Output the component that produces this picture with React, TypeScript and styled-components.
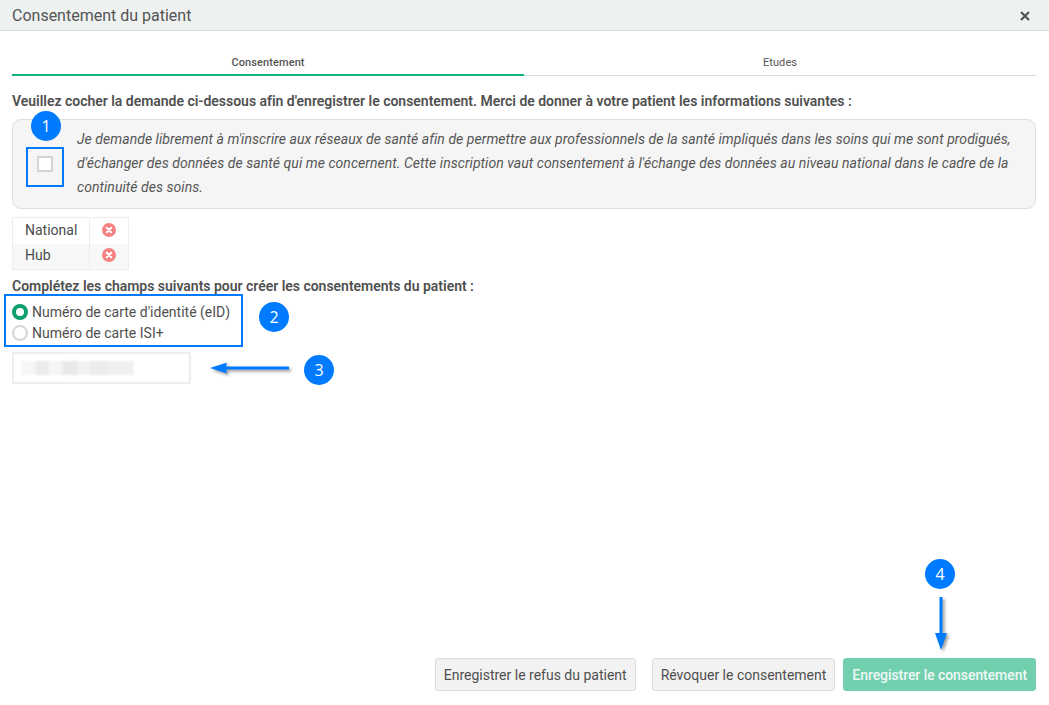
import styled, { createGlobalStyle } from "styled-components";

const GlobalStyle = createGlobalStyle`
  html, body {
    margin: 0;
    padding: 0;
    background: #fff;
  }
  * {
    box-sizing: border-box;
  }
`;

const Page = styled.div`
  position: relative;
  width: 1049px;
  height: 705px;
  display: flex;
  flex-direction: column;
  overflow: hidden;
  background: #fff;
  font-family: Roboto, "Liberation Sans", sans-serif;
  font-size: 14px;
  color: #4a4a4a;
`;

const Header = styled.div`
  height: 31px;
  flex: none;
  display: flex;
  align-items: center;
  justify-content: space-between;
  padding: 1px 19px 0 12px;
  background: #edf1f0;
  border-bottom: 1px solid #d8dedd;
`;

const Title = styled.div`
  font-size: 16px;
  color: #555;
`;

const CloseIcon = styled.svg`
  width: 10px;
  height: 10px;
  display: block;
`;

const Body = styled.div`
  flex: 1;
  display: flex;
  flex-direction: column;
  padding: 0 13px 14px 12px;
`;

const Tabs = styled.div`
  display: flex;
  height: 45px;
  flex: none;
`;

const Tab = styled.div<{ $active?: boolean }>`
  flex: 1;
  display: flex;
  align-items: flex-end;
  justify-content: center;
  padding-bottom: ${({ $active }) => ($active ? "5px" : "6px")};
  font-size: 11px;
  font-weight: ${({ $active }) => ($active ? 500 : 400)};
  letter-spacing: 0.1px;
  color: #555;
  border-bottom: ${({ $active }) =>
    $active ? "2px solid #13b381" : "1px solid #d5dedd"};
`;

const Instruction = styled.div`
  margin-top: 17px;
  font-size: 14px;
  line-height: 17px;
  font-weight: 600;
  letter-spacing: -0.02px;
  color: #505050;
`;

const ConsentBox = styled.div`
  margin-top: 9px;
  height: 90px;
  flex: none;
  display: flex;
  align-items: center;
  padding: 0 20px 2px 24px;
  gap: 24px;
  background: #f5f5f5;
  border: 1px solid #dfdfdf;
  border-radius: 9px;
`;

const CheckBox = styled.div`
  flex: none;
  width: 16px;
  height: 16px;
  margin-top: 2px;
  background: #fff;
  border: 2px solid #d5d5d5;
`;

const ConsentText = styled.div`
  font-style: italic;
  font-size: 14px;
  line-height: 24px;
  letter-spacing: 0.05px;
  color: #555;
`;

const StatusTable = styled.div`
  margin-top: 8px;
  width: 117px;
  flex: none;
  border: 1px solid #eceeee;
`;

const StatusRow = styled.div<{ $shaded?: boolean }>`
  display: flex;
  height: ${({ $shaded }) => ($shaded ? "25px" : "26px")};
  padding-bottom: ${({ $shaded }) => ($shaded ? "1px" : "0")};
  background: ${({ $shaded }) => ($shaded ? "#f7f8f8" : "#fff")};
`;

const StatusName = styled.div`
  width: 77px;
  display: flex;
  align-items: center;
  padding: 0 0 2px 12px;
  border-right: 1px solid #eceeee;
`;

const StatusIcon = styled.div`
  flex: 1;
  display: flex;
  align-items: center;
  justify-content: center;
  padding-bottom: 2px;
`;

const SubHeading = styled.div`
  margin-top: 8px;
  font-size: 14px;
  line-height: 17px;
  font-weight: 600;
  letter-spacing: -0.02px;
  color: #505050;
`;

const RadioGroup = styled.div`
  margin-top: 7px;
  display: flex;
  flex-direction: column;
  gap: 1px;
`;

const RadioRow = styled.div`
  display: flex;
  align-items: center;
  height: 20px;
  gap: 4px;
  font-size: 14px;
  color: #4f4f4f;
`;

const Radio = styled.div<{ $checked?: boolean }>`
  width: 16px;
  height: 16px;
  border-radius: 50%;
  background: #fff;
  border: ${({ $checked }) =>
    $checked ? "4px solid #0e9e6e" : "2px solid #d5d5d5"};
`;

const IdInput = styled.div`
  margin-top: 9px;
  width: 179px;
  height: 32px;
  flex: none;
  display: flex;
  align-items: center;
  padding-left: 7px;
  border: 2px solid #eeeeee;
  background: #fff;
`;

// blurred-out card number
const BlurredValue = styled.div`
  width: 113px;
  height: 14px;
  filter: blur(1px);
  background: linear-gradient(
    90deg,
    #f6f6f6 0 13%,
    #ececec 13% 25%,
    #f6f6f6 25% 36%,
    #e9e9e9 36% 50%,
    #f2f2f2 50% 62%,
    #ececec 62% 78%,
    #f0f0f0 78% 100%
  );
`;

const Footer = styled.div`
  margin-top: auto;
  display: flex;
  justify-content: flex-end;
  gap: 16px;
`;

const Button = styled.button<{ $primary?: boolean }>`
  all: unset;
  height: 31px;
  display: flex;
  align-items: center;
  padding: 0 8px;
  font-family: Roboto, "Liberation Sans", sans-serif;
  font-size: 14px;
  border-radius: 3px;
  color: ${({ $primary }) => ($primary ? "#eef9f5" : "#4f4f4f")};
  background: ${({ $primary }) => ($primary ? "#71cfae" : "#f2f2f2")};
  border: 1px solid ${({ $primary }) => ($primary ? "#71cfae" : "#dcdcdc")};
  font-weight: ${({ $primary }) => ($primary ? 500 : 400)};
`;

const PrimaryButton = styled(Button)`
  margin-left: -8px;
  letter-spacing: -0.07px;
`;

const Badge = styled.div<{ $x: number; $y: number }>`
  position: absolute;
  left: ${({ $x }) => $x}px;
  top: ${({ $y }) => $y}px;
  width: 30px;
  height: 30px;
  display: flex;
  align-items: center;
  justify-content: center;
  border-radius: 50%;
  background: #007bff;
  color: #fff;
  font-family: "Open Sans", "Liberation Sans", sans-serif;
  font-size: 16px;
`;

const Frame = styled.div<{ $x: number; $y: number; $w: number; $h: number }>`
  position: absolute;
  left: ${({ $x }) => $x}px;
  top: ${({ $y }) => $y}px;
  width: ${({ $w }) => $w}px;
  height: ${({ $h }) => $h}px;
  border: 2px solid #007bff;
`;

const Arrow = styled.svg<{ $x: number; $y: number }>`
  position: absolute;
  left: ${({ $x }) => $x}px;
  top: ${({ $y }) => $y}px;
  overflow: visible;
  filter: drop-shadow(2px 2px 1.5px rgba(0, 0, 0, 0.4));
`;

const ErrorIcon = () => (
  <svg width="14" height="14" viewBox="0 0 14 14">
    <circle cx="7" cy="7" r="7" fill="#f58383" />
    <path
      d="M4.8 4.8l4.4 4.4M9.2 4.8l-4.4 4.4"
      stroke="#fff"
      strokeWidth="2"
      strokeLinecap="round"
    />
  </svg>
);

const App = () => {
  return (
    <Page>
      <GlobalStyle />
      <Header>
        <Title>Consentement du patient</Title>
        <CloseIcon viewBox="0 0 10 10">
          <path d="M1 1l8 8M9 1l-8 8" stroke="#4a4f52" strokeWidth="2" />
        </CloseIcon>
      </Header>
      <Body>
        <Tabs>
          <Tab $active>Consentement</Tab>
          <Tab>Etudes</Tab>
        </Tabs>
        <Instruction>
          Veuillez cocher la demande ci-dessous afin d'enregistrer le
          consentement. Merci de donner à votre patient les informations
          suivantes :
        </Instruction>
        <ConsentBox>
          <CheckBox />
          <ConsentText>
            Je demande librement à m'inscrire aux réseaux de santé afin de
            permettre aux professionnels de la santé impliqués dans les soins
            qui me sont prodigués, d'échanger des données de santé qui me
            concernent. Cette inscription vaut consentement à l'échange des
            données au niveau national dans le cadre de la continuité des soins.
          </ConsentText>
        </ConsentBox>
        <StatusTable>
          <StatusRow>
            <StatusName>National</StatusName>
            <StatusIcon>
              <ErrorIcon />
            </StatusIcon>
          </StatusRow>
          <StatusRow $shaded>
            <StatusName>Hub</StatusName>
            <StatusIcon>
              <ErrorIcon />
            </StatusIcon>
          </StatusRow>
        </StatusTable>
        <SubHeading>
          Complétez les champs suivants pour créer les consentements du patient :
        </SubHeading>
        <RadioGroup>
          <RadioRow>
            <Radio $checked />
            Numéro de carte d'identité (eID)
          </RadioRow>
          <RadioRow>
            <Radio />
            Numéro de carte ISI+
          </RadioRow>
        </RadioGroup>
        <IdInput>
          <BlurredValue />
        </IdInput>
        <Footer>
          <Button>Enregistrer le refus du patient</Button>
          <Button>Révoquer le consentement</Button>
          <PrimaryButton $primary>Enregistrer le consentement</PrimaryButton>
        </Footer>
      </Body>

      <Frame $x={26} $y={147} $w={38} $h={40} />
      <Frame $x={4} $y={294} $w={239} $h={53} />
      <Badge $x={31} $y={111}>1</Badge>
      <Badge $x={259} $y={302}>2</Badge>
      <Badge $x={304} $y={355}>3</Badge>
      <Badge $x={925} $y={559}>4</Badge>
      <Arrow $x={210} $y={362} width="79" height="12" viewBox="0 0 79 12">
        <path d="M0 6l17-5.5-1 4h63v3H16l1 4z" fill="#007bff" />
      </Arrow>
      <Arrow $x={935} $y={597} width="12" height="54" viewBox="0 0 12 54">
        <path d="M4.5 0h3v36l4.5 0-6 17-6-17 4.5 0z" fill="#007bff" />
      </Arrow>
    </Page>
  );
};

export default App;
